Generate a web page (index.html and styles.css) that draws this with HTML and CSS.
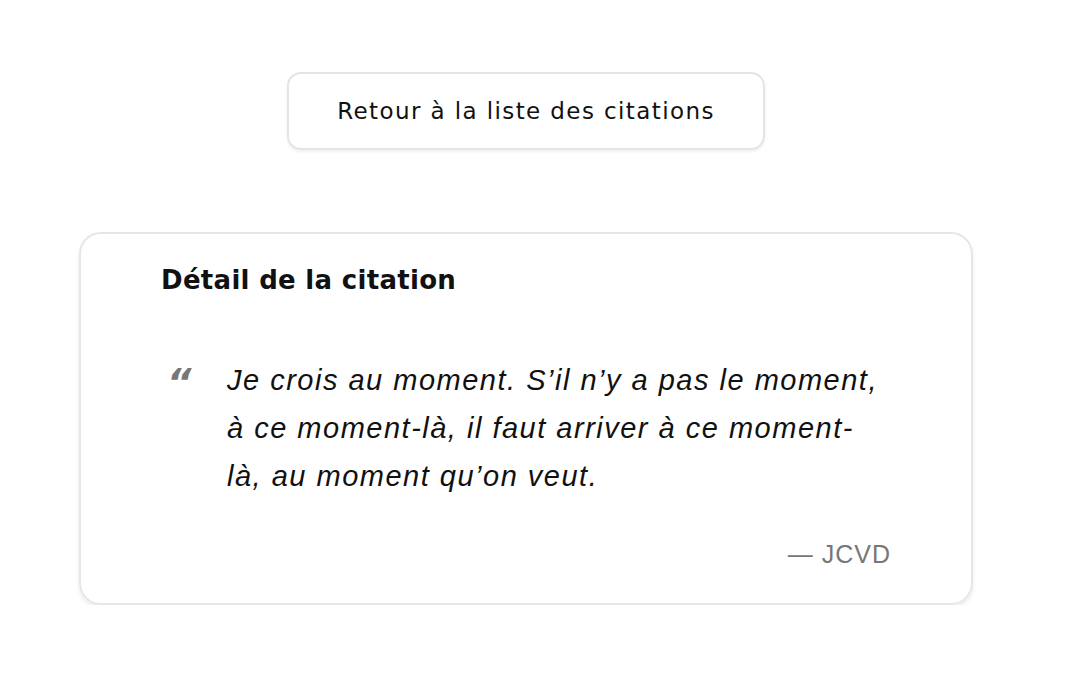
FILE: index.html
```html
<!DOCTYPE html>
<html lang="fr">
<head>
<meta charset="utf-8">
<title>Détail de la citation</title>
<link rel="stylesheet" href="styles.css">
</head>
<body>
<main class="page">
  <div class="back-row">
    <a class="back-btn" href="#">Retour à la liste des citations</a>
  </div>
  <section class="card">
    <h1 class="card-title">Détail de la citation</h1>
    <figure class="quote">
      <span class="quote-mark">“</span>
      <blockquote class="quote-text">Je crois au moment. S’il n’y a pas le moment, à ce moment-là, il faut arriver à ce moment-là, au moment qu’on veut.</blockquote>
    </figure>
    <p class="author">— JCVD</p>
  </section>
</main>
</body>
</html>
```
FILE: styles.css
```css
* { box-sizing: border-box; }
html, body { margin: 0; padding: 0; background: #fff; }
body {
  font-family: "DejaVu Sans", "Noto Sans", sans-serif;
  color: #111;
}
.page {
  width: 894px;
  margin-left: 79px;
  padding-top: 72px;
  display: flex;
  flex-direction: column;
}
.back-row {
  display: flex;
  justify-content: center;
}
.back-btn {
  display: flex;
  align-items: center;
  justify-content: center;
  width: 478px;
  height: 78px;
  border: 2px solid #e4e4e4;
  border-radius: 14px;
  box-shadow: 0 2px 3px rgba(0,0,0,0.06);
  color: #111;
  text-decoration: none;
  font-size: 23px;
  font-weight: 400;
  letter-spacing: 1.4px;
}
.card {
  margin-top: 82px;
  height: 373px;
  border: 2px solid #e6e6e6;
  border-radius: 22px;
  box-shadow: 0 3px 4px rgba(0,0,0,0.08);
  padding: 30px 80px 0 80px;
}
.card-title {
  margin: 0;
  font-size: 26px;
  font-weight: 700;
  line-height: 32px;
  letter-spacing: 0.3px;
}
.quote {
  margin: 60px 0 0 0;
  display: flex;
}
.quote-mark {
  flex: 0 0 66px;
  padding-left: 6px;
  font-family: "DejaVu Sans", sans-serif;
  font-style: italic;
  font-weight: 700;
  font-size: 38px;
  line-height: 52px;
  color: #777;
}
.quote-text {
  margin: 0;
  font-family: "Liberation Sans", Arial, sans-serif;
  font-style: italic;
  font-size: 29px;
  line-height: 48px;
  letter-spacing: 1.5px;
  max-width: 656px;
}
.author {
  margin: 39px 0 0 0;
  text-align: right;
  font-family: "Liberation Sans", Arial, sans-serif;
  font-size: 25px;
  line-height: 30px;
  letter-spacing: 1px;
  color: #777;
}
```
